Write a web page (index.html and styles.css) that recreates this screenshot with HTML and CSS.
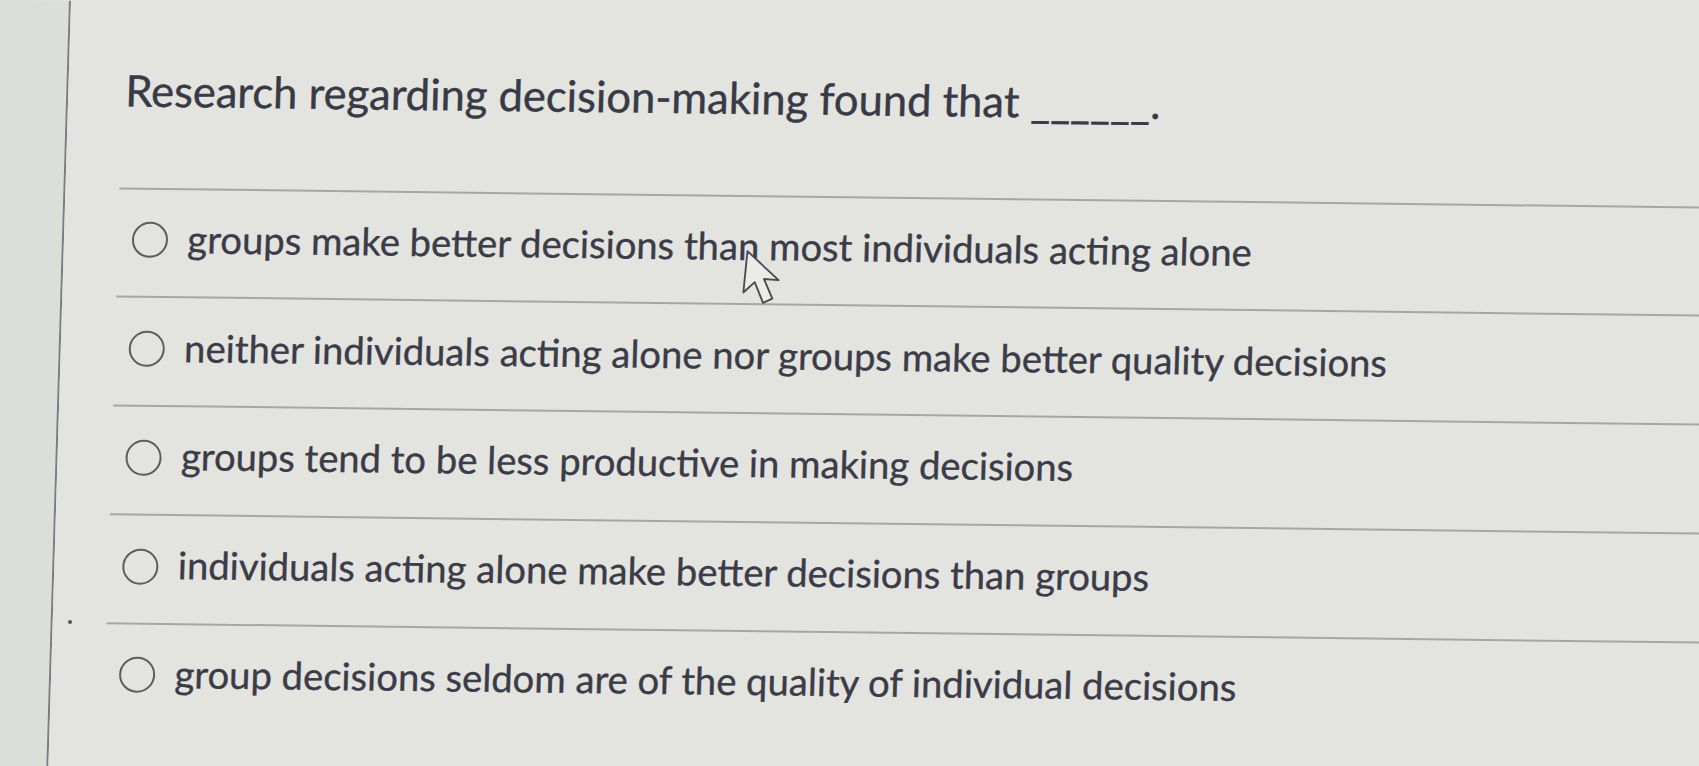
FILE: index.html
```html
<!DOCTYPE html>
<html lang="en">
<head>
<meta charset="utf-8">
<title>Quiz question</title>
<link rel="stylesheet" href="styles.css">
</head>
<body>
  <div class="frame">
    <div class="screen">
      <aside class="rail"></aside>
      <main class="quiz">
        <h1 class="question">Research regarding decision-making found that ______.</h1>
        <ul class="options">
          <li class="option"><span class="radio"></span><span class="label">groups make better decisions than most individuals acting alone</span></li>
          <li class="option"><span class="radio"></span><span class="label">neither individuals acting alone nor groups make better quality decisions</span></li>
          <li class="option"><span class="radio"></span><span class="label">groups tend to be less productive in making decisions</span></li>
          <li class="option"><span class="radio"></span><span class="label">individuals acting alone make better decisions than groups</span></li>
          <li class="option"><span class="radio"></span><span class="label">group decisions seldom are of the quality of individual decisions</span></li>
        </ul>
      </main>
    </div>
    <span class="speck"></span>
    <svg class="cursor" width="46" height="60" viewBox="0 0 44 58" aria-hidden="true">
      <polygon points="7,3 3,43 14,33 22,53 31,49 23,30 37,31" fill="#ebebe7" stroke="#4a4a52" stroke-width="1.8" stroke-linejoin="round"/>
    </svg>
  </div>
</body>
</html>
```

FILE: styles.css
```css
html, body {
  margin: 0;
  padding: 0;
  background: #e2e2de;
  overflow: hidden;
}

body {
  font-family: Lato, "Open Sans", sans-serif;
  color: #3b3c48;
}

.frame {
  position: relative;
  width: 1699px;
  height: 766px;
  overflow: hidden;
  background: #e3e3df;
}

.screen {
  display: flex;
  width: 1780px;
  height: 800px;
  margin-top: -20px;
  padding-top: 20px;
  transform-origin: 0 20px;
  transform: rotate(0.69deg) skewX(-1deg);
}

.rail {
  flex: 0 0 69px;
  background: #dcdeda;
  border-right: 2px solid #7c7c84;
}

.quiz {
  flex: 1;
  background: #e3e3df;
  padding-left: 54px;
}

.question {
  margin: 0;
  padding-top: 62px;
  padding-left: 3px;
  font-size: 43.5px;
  line-height: 52px;
  font-weight: 400;
  color: #383a46;
  height: 52px;
  margin-bottom: 71.6px;
  -webkit-text-stroke: 0.4px #383a46;
}

.options {
  list-style: none;
  margin: 0;
  padding: 0;
}

.option {
  display: flex;
  align-items: center;
  border-top: 2px solid #a6a6a6;
  padding: 25.3px 0 35.45px 14.5px;
  height: 46px;
}

.radio {
  flex: 0 0 auto;
  width: 32px;
  height: 32px;
  border: 2.5px solid #5c5c62;
  border-radius: 50%;
  margin-top: 5px;
  margin-left: -0.5px;
  margin-right: 19.5px;
}

.label {
  font-size: 38.2px;
  line-height: 46px;
  white-space: nowrap;
  -webkit-text-stroke: 0.35px #3b3c48;
}

.cursor {
  position: absolute;
  left: 740px;
  top: 248px;
}

.speck {
  position: absolute;
  left: 68px;
  top: 620px;
  width: 4px;
  height: 4px;
  border-radius: 50%;
  background: #555;
}
```
